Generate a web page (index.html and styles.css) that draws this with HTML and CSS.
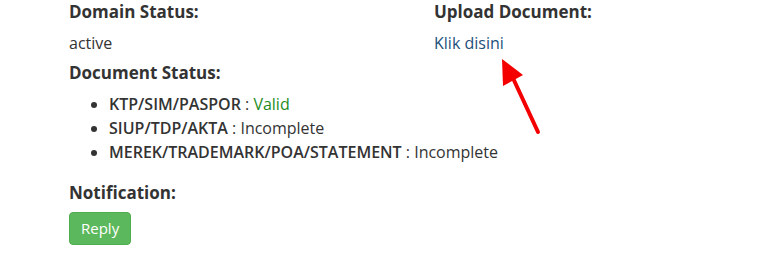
FILE: index.html
```html
<!DOCTYPE html>
<html lang="id">
<head>
  <meta charset="UTF-8">
  <title>Domain Detail</title>
  <link rel="stylesheet" href="styles.css">
</head>
<body>
  <div class="content">
    <div class="info-row">
      <div class="info-col">
        <h4 class="label">Domain Status:</h4>
        <p class="value">active</p>
        <h4 class="label">Document Status:</h4>
        <ul class="doc-list">
          <li><b>KTP/SIM/PASPOR</b> : <span class="valid">Valid</span></li>
          <li><b>SIUP/TDP/AKTA</b> : Incomplete</li>
          <li><b>MEREK/TRADEMARK/POA/STATEMENT</b> : Incomplete</li>
        </ul>
      </div>
      <div class="info-col upload-col">
        <h4 class="label">Upload Document:</h4>
        <p class="value"><a href="#" class="link">Klik disini</a></p>
        <svg class="arrow" width="60" height="90" viewBox="0 0 60 90">
          <line x1="42" y1="76" x2="16" y2="20" stroke="#f40000" stroke-width="4" stroke-linecap="round"/>
          <polygon points="6,3 27,19 7,30" fill="#f40000"/>
        </svg>
      </div>
    </div>
    <h4 class="label notif">Notification:</h4>
    <button class="btn-reply">Reply</button>
  </div>
</body>
</html>
```
FILE: styles.css
```css
body {
  margin: 0;
  background: #fff;
  font-family: "Open Sans", "Liberation Sans", sans-serif;
  font-size: 16px;
  color: #333;
}
.content {
  padding: 0 0 0 69px;
}
.info-row {
  display: flex;
}
.info-col {
  flex: 0 0 365px;
  min-width: 0;
  white-space: nowrap;
}
.upload-col {
  flex: 1 1 auto;
  position: relative;
}
.label {
  font-family: "Open Sans", "Liberation Sans", sans-serif;
  font-weight: bold;
  font-size: 17px;
  color: #333;
  margin: 0;
  line-height: 24px;
}
.value {
  margin: 7px 0 6px 0;
  line-height: 24px;
}
.link {
  color: #1d4f7b;
  text-decoration: none;
}
.doc-list {
  margin: 7px 0 0 0;
  padding-left: 40px;
  line-height: 24px;
}
.doc-list b {
  font-weight: 600;
}
.valid {
  color: #1e8c1e;
}
.notif {
  margin-top: 17px;
}
.arrow {
  position: absolute;
  left: 62px;
  top: 56px;
}
.btn-reply {
  margin-top: 7px;
  background: #5cb85c;
  border: 1px solid #4cae4c;
  border-radius: 4px;
  color: #fff;
  font-family: "Open Sans", "Liberation Sans", sans-serif;
  font-size: 15px;
  padding: 6px 11px;
  line-height: 19px;
}
```
